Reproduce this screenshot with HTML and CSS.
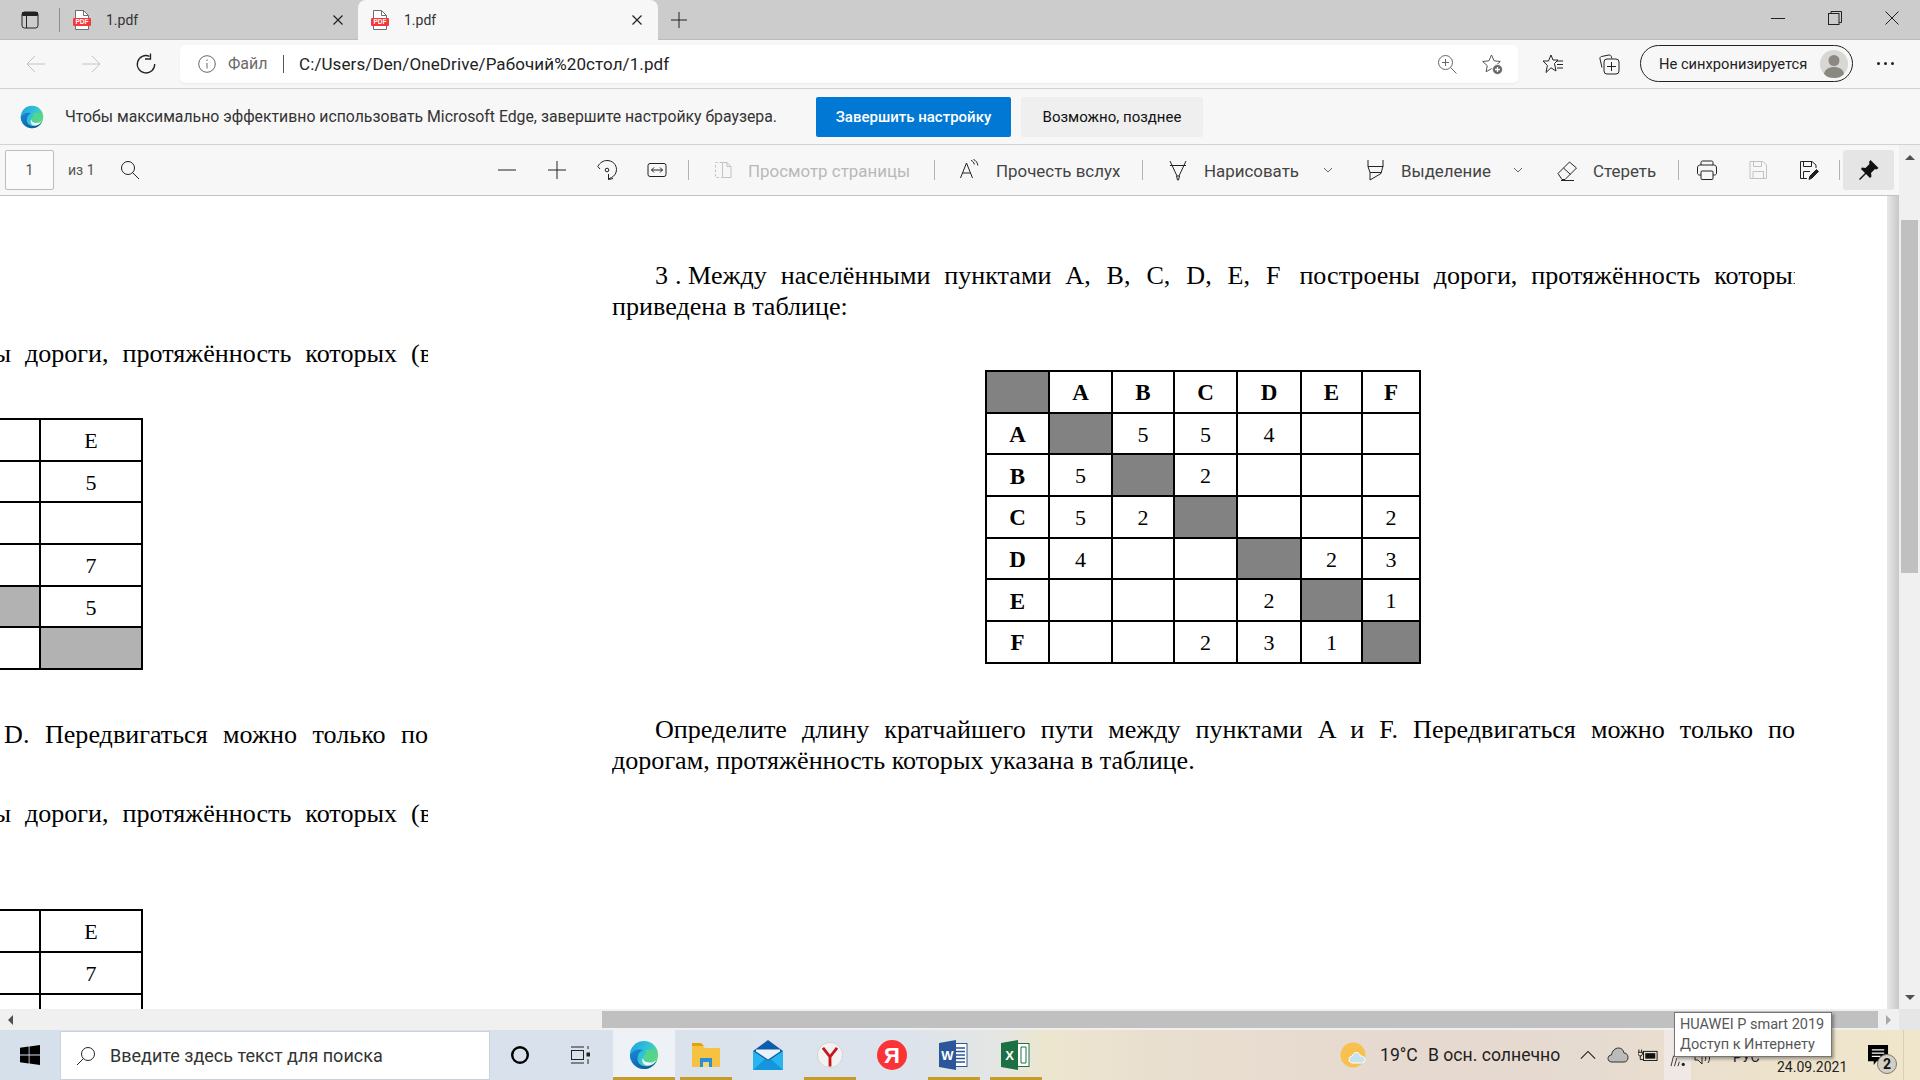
FILE: index.html
```html
<!DOCTYPE html>
<html>
<head>
<meta charset="UTF-8">
<title>1.pdf</title>
<link rel="stylesheet" href="styles.css">
</head>
<body>
<svg class="defs" width="0" height="0">
	<defs>
		<linearGradient id="edgeTop" x1="0" y1="0" x2="1" y2="0.6">
			<stop offset="0" stop-color="#1f9fe0"/>
			<stop offset="0.55" stop-color="#2fc3d8"/>
			<stop offset="1" stop-color="#66dc7a"/>
		</linearGradient>
		<linearGradient id="edgeLow" x1="0" y1="0" x2="1" y2="1">
			<stop offset="0" stop-color="#1a8ad6"/>
			<stop offset="1" stop-color="#0c4f9e"/>
		</linearGradient>
		<symbol id="pdf" viewBox="0 0 18 20">
			<path d="M2.5.5h8l5 5v14h-13z" fill="#fff" stroke="#6e6e6e"/>
			<path d="M10.5.5v5h5" fill="none" stroke="#6e6e6e"/>
			<rect y="8" width="18" height="8" rx="1" fill="#f4383c"/>
			<text x="9" y="14.4" class="pdf-mark">PDF</text>
		</symbol>
		<symbol id="edge" viewBox="0 0 32 32">
			<circle cx="16" cy="16" r="15" fill="url(#edgeTop)"/>
			<path d="M30 21c-2 6-8 10-14 10C8 31 1 24 1 16c3-5 9-7 14-5-4 1-6 5-6 9 0 5 4 8 9 8 5 0 9-3 12-7z" fill="url(#edgeLow)"/>
			<path d="M30.500 17c-1 3-5 5-9 5-4 0-6-2-6-4 0-1 1-1.500 2-2.500 1-1.500 1-3-.5-4.500 7-1 13 1 13.500 6z" fill="#55d58a"/>
			<path d="M15 19c0 3 3 5 7 5 3 0 6-1 8-3-3 5-8 7-12 6-3-1-5-4-3-8z" fill="#eaf6fb"/>
		</symbol>
		<symbol id="chev" viewBox="0 0 12 12">
			<path d="M2 4l4 4 4-4" fill="none" stroke="#666"/>
		</symbol>
	</defs>
</svg>

<div class="tabstrip">
	<div class="strip-btn">
		<svg class="ico i20" viewBox="0 0 20 20"><rect x="2" y="2" width="16" height="16" rx="2.500"/><path d="M2.500 2.500h15v3h-15z" fill="#222"/><path d="M6.500 5v13"/></svg>
	</div>
	<div class="tab-sep"></div>
	<div class="tab">
		<svg class="tab-pdf"><use href="#pdf"/></svg>
		<span class="tab-title">1.pdf</span>
		<svg class="ico i12" viewBox="0 0 12 12"><path d="M1.500 1.500l9 9M10.500 1.500l-9 9" stroke-width="1.200"/></svg>
	</div>
	<div class="tab tab-active">
		<svg class="tab-pdf"><use href="#pdf"/></svg>
		<span class="tab-title">1.pdf</span>
		<svg class="ico i12" viewBox="0 0 12 12"><path d="M1.500 1.500l9 9M10.500 1.500l-9 9" stroke-width="1.200"/></svg>
	</div>
	<div class="new-tab">
		<svg class="ico i20" viewBox="0 0 20 20"><path d="M10 2v16M2 10h16"/></svg>
	</div>
	<div class="win-controls">
		<div class="win-btn"><svg class="ico i14" viewBox="0 0 14 14"><path d="M0 7.500h14"/></svg></div>
		<div class="win-btn"><svg class="ico i14" viewBox="0 0 14 14"><rect x=".5" y="2.500" width="10.500" height="11"/><path d="M3 2.500V.5h10.500v11h-2.500"/></svg></div>
		<div class="win-btn"><svg class="ico i14" viewBox="0 0 14 14"><path d="M.5.5l13 13M13.500.5l-13 13"/></svg></div>
	</div>
</div>

<div class="addressbar">
	<div class="nav-btn muted"><svg class="ico i22" viewBox="0 0 22 22"><path d="M20 11H2M10 3l-8 8 8 8"/></svg></div>
	<div class="nav-btn muted"><svg class="ico i22" viewBox="0 0 22 22"><path d="M2 11h18M12 3l8 8-8 8"/></svg></div>
	<div class="nav-btn"><svg class="ico i22" viewBox="0 0 22 22"><path d="M14.500 3.300A8.700 8.700 0 1 0 19.700 11" stroke-width="1.300"/><path d="M15.500.5v5.500H10" stroke-width="1.300"/></svg></div>
	<div class="address-box">
		<svg class="ico i18 grey" viewBox="0 0 18 18"><circle cx="9" cy="9" r="8.300"/><path d="M9 8v5.500M9 4.500v1.500"/></svg>
		<span class="addr-file">Файл</span>
		<span class="addr-sep"></span>
		<span class="addr-url">C:/Users/Den/OneDrive/Рабочий%20стол/1.pdf</span>
		<svg class="ico i20 grey addr-zoom" viewBox="0 0 20 20"><circle cx="8.500" cy="8.500" r="7"/><path d="M13.500 13.500l6 6M8.500 5v7M5 8.500h7"/></svg>
		<svg class="ico i22 addr-star" viewBox="0 0 22 22"><path d="M10.500 2l2.600 5.800 6.200.7-4.600 4.200 1.200 6-5.400-3-5.400 3 1.200-6L1.700 8.500l6.200-.7z" stroke="#555"/><circle cx="16.500" cy="16.500" r="5" fill="#666" stroke="#f7f7f7"/><path d="M16.500 14v5M14 16.500h5" stroke="#fff" stroke-width="1.300"/></svg>
	</div>
	<div class="addr-action"><svg class="ico i22" viewBox="0 0 22 22"><path d="M9 2l2 5h5l-3.500 3.500L14 18l-5-3.200L4 19.500l1.400-7L1 8h5.500z"/><path d="M15 8h6M15 11.500h6M15 15h6"/></svg></div>
	<div class="addr-action"><svg class="ico i22" viewBox="0 0 22 22"><path d="M4 14.500L2 6c-.300-1.300.400-2.300 1.500-2.500L11 2c1.300-.2 2 .5 2.300 1.500l.5 2"/><rect x="6" y="6" width="15" height="15" rx="3"/><path d="M13.500 9v9M9 13.500h9"/></svg></div>
	<div class="profile-pill">
		<span>Не синхронизируется</span>
		<svg class="avatar" viewBox="0 0 28 28"><circle cx="14" cy="14" r="14" fill="#d9d7d3"/><circle cx="14" cy="10.500" r="5.500" fill="#8b8781"/><path d="M4 24c1-5 5-7 10-7s9 2 10 7c-3 3-6 4-10 4s-7-1-10-4z" fill="#8b8781"/></svg>
	</div>
	<div class="more-btn"><i></i><i></i><i></i></div>
</div>

<div class="infobar">
	<svg class="edge-logo"><use href="#edge"/></svg>
	<span class="info-text">Чтобы максимально эффективно использовать Microsoft Edge, завершите настройку браузера.</span>
	<button class="btn-primary" type="button">Завершить настройку</button>
	<button class="btn-later" type="button">Возможно, позднее</button>
</div>

<div class="workspace">
	<div class="work-main">
		<div class="toolbar">
			<div class="page-input">1</div>
			<span class="page-total">из 1</span>
			<div class="tb-search"><svg class="ico i20" viewBox="0 0 20 20"><circle cx="8" cy="8" r="6.500"/><path d="M12.500 12.500l6.500 6.500"/></svg></div>
			<div class="tb-spacer"></div>
			<div class="tb-icon"><svg class="ico i20" viewBox="0 0 20 20"><path d="M1 10h18"/></svg></div>
			<div class="tb-icon"><svg class="ico i20" viewBox="0 0 20 20"><path d="M10 1v18M1 10h18"/></svg></div>
			<div class="tb-icon"><svg class="ico i20" viewBox="0 0 20 20"><path d="M3 9L.8 6.500C3 2.500 6.500.5 10 .5c5.500 0 9.500 4 9.500 9 0 3.500-2 6.500-5 8l-3 1.500"/><path d="M11.500 14v5.500l4.500-1"/><circle cx="10" cy="10" r="1.800"/></svg></div>
			<div class="tb-icon"><svg class="ico i20" viewBox="0 0 20 20"><rect x="1" y="3.500" width="18" height="13" rx="2"/><path d="M4.500 10h11M7 7.500L4.500 10 7 12.500M13 7.500l2.500 2.500-2.500 2.500"/></svg></div>
			<div class="tb-sep sep-fit"></div>
			<div class="tb-btn disabled w-view">
				<svg class="ico i20" viewBox="0 0 20 20"><path d="M9 2.500h-6.500v15H9" stroke-dasharray="2.500 2"/><path d="M9.500 2.500H14l4 4v11H9.500zM14 2.500v4h4"/></svg>
				<span class="tb-label">Просмотр страницы</span>
			</div>
			<div class="tb-sep"></div>
			<div class="tb-btn w-read">
				<svg class="ico i22" viewBox="0 0 22 22"><path d="M1.500 19L7.500 4l6 15M3.500 14h8"/><path d="M12 1.500c2 .5 3 2 3.300 4M14.500.5c2.500 1 4 3 4.300 6"/></svg>
				<span class="tb-label">Прочесть вслух</span>
			</div>
			<div class="tb-sep"></div>
			<div class="tb-btn w-draw">
				<svg class="ico i22" viewBox="0 0 22 22"><path d="M3 2l7 15h2l7-15M3 6.500h16M9.500 17l1 4h1l1-4"/></svg>
				<span class="tb-label">Нарисовать</span>
				<svg class="tb-chev"><use href="#chev"/></svg>
			</div>
			<div class="tb-btn w-mark">
				<svg class="ico i22" viewBox="0 0 22 22"><path d="M4 1v6.500h15V1M4 7.500l2 6v7.500l11-6.500 2-7.500M6 13.500h11"/></svg>
				<span class="tb-label">Выделение</span>
				<svg class="tb-chev"><use href="#chev"/></svg>
			</div>
			<div class="tb-btn w-erase">
				<svg class="ico i22" viewBox="0 0 22 22"><path d="M2 14.500L13.500 3l7 6L9 20.500h-3z"/><path d="M7.500 9l7 6.500M5 21.500h13"/></svg>
				<span class="tb-label">Стереть</span>
			</div>
			<div class="tb-sep"></div>
			<div class="tb-icon w-print"><svg class="ico i22" viewBox="0 0 22 22"><path d="M5 6V3.500C5 2.500 5.500 2 6.500 2h9c1 0 1.500.5 1.500 1.500V6"/><path d="M5 16H3.500C2 16 1.500 15 1.500 14V9c0-2 1-3 3-3h13c2 0 3 1 3 3v5c0 1-.5 2-2 2H17"/><rect x="5" y="12" width="12" height="8.500" rx="1"/></svg></div>
			<div class="tb-icon w-save disabled"><svg class="ico i22" viewBox="0 0 22 22"><path d="M3 2.500h13l3.500 3.500v13.500H3z"/><path d="M6.500 2.500v5h8v-5M6 19.500v-7h10.500v7"/></svg></div>
			<div class="tb-icon w-print"><svg class="ico i22" viewBox="0 0 22 22"><path d="M10 19.500H3.500v-17H15L19 6v3"/><path d="M6.500 2.500v5h8v-5M6.500 19v-6.500H13"/><path d="M12 20.500l1-3.500 6.500-6.500 2 2-6.500 6.500z" fill="#222"/></svg></div>
			<div class="tb-sep sep-pin"></div>
			<div class="tb-pin"><svg class="i22" viewBox="0 0 22 22"><path d="M12.500 1l8 8-2 1.500-1.500-.5-4 4 .5 3.500-1.500 1.500-4-4-6 6-1-1 6-6-4-4L4 8.500l3.500.5 4-4L11 3z" fill="#111"/></svg></div>
		</div>
		<div class="viewer">
			<div class="page-left">
				<div class="cut-line"><span class="wide-line">построены дороги, протяжённость которых (в</span></div>
				<table class="road-table faint table-first">
					<colgroup><col class="c-l0"><col class="c-l1"></colgroup>
					<tr><td></td><td>E</td></tr>
					<tr><td></td><td>5</td></tr>
					<tr><td></td><td></td></tr>
					<tr><td></td><td>7</td></tr>
					<tr><td class="shade"></td><td>5</td></tr>
					<tr><td></td><td class="shade"></td></tr>
				</table>
				<div class="cut-line line-d"><span class="d-line">A и D. Передвигаться можно только по</span></div>
				<div class="cut-line line-third"><span class="wide-line">построены дороги, протяжённость которых (в</span></div>
				<table class="road-table faint table-second">
					<colgroup><col class="c-l0"><col class="c-l1"></colgroup>
					<tr><td></td><td>E</td></tr>
					<tr><td></td><td>7</td></tr>
					<tr><td></td><td></td></tr>
				</table>
			</div>
			<div class="page-right">
				<p class="pdf-line first-line"><span class="task-no">3</span><span class="task-dot">.</span>Между населёнными пунктами <span class="point-list">A, B, C, D, E, F</span> построены дороги, протяжённость которых (в километрах)</p>
				<p class="pdf-line">приведена в таблице:</p>
				<table class="road-table solid table-main">
					<colgroup><col class="c-0"><col class="c-1"><col class="c-2"><col class="c-3"><col class="c-4"><col class="c-5"><col class="c-6"></colgroup>
					<tr><td class="shade"></td><th>A</th><th>B</th><th>C</th><th>D</th><th>E</th><th>F</th></tr>
					<tr><th>A</th><td class="shade"></td><td>5</td><td>5</td><td>4</td><td></td><td></td></tr>
					<tr><th>B</th><td>5</td><td class="shade"></td><td>2</td><td></td><td></td><td></td></tr>
					<tr><th>C</th><td>5</td><td>2</td><td class="shade"></td><td></td><td></td><td>2</td></tr>
					<tr><th>D</th><td>4</td><td></td><td></td><td class="shade"></td><td>2</td><td>3</td></tr>
					<tr><th>E</th><td></td><td></td><td></td><td>2</td><td class="shade"></td><td>1</td></tr>
					<tr><th>F</th><td></td><td></td><td>2</td><td>3</td><td>1</td><td class="shade"></td></tr>
				</table>
				<p class="pdf-line justified indent after-table">Определите длину кратчайшего пути между пунктами A и F. Передвигаться можно только по</p>
				<p class="pdf-line">дорогам, протяжённость которых указана в таблице.</p>
			</div>
			<div class="page-shadow"></div>
		</div>
	</div>
	<div class="vscroll">
		<div class="arrow-box"><i class="tri-up"></i></div>
		<div class="vthumb"></div>
		<div class="arrow-box arrow-end"><i class="tri-down"></i></div>
	</div>
</div>

<div class="hscroll">
	<div class="arrow-box-h"><i class="tri-left"></i></div>
	<div class="hthumb"></div>
	<div class="arrow-box-h"><i class="tri-right"></i></div>
	<div class="scroll-corner"></div>
</div>

<div class="taskbar">
	<div class="start-btn">
		<svg class="i20" viewBox="0 0 20 20"><path d="M0 2.800l8.700-1.200v8H0zM9.500 1.500L20 0v9.600H9.500zM0 10.400h8.700v8L0 17.200zM9.500 10.400H20V20L9.500 18.500z" fill="#000"/></svg>
	</div>
	<div class="search-box">
		<svg class="ico i20" viewBox="0 0 20 20"><circle cx="12" cy="8" r="6.500"/><path d="M7.500 12.500L1 19"/></svg>
		<span>Введите здесь текст для поиска</span>
	</div>
	<div class="task-fixed"><svg class="i20" viewBox="0 0 20 20"><circle cx="10" cy="10" r="7.800" fill="none" stroke="#000" stroke-width="2.400"/></svg></div>
	<div class="task-fixed task-view"><svg class="ico i20" viewBox="0 0 20 20"><path d="M1 2h13M1 18h13M18 1v3M18 14v5"/><rect x="1.500" y="5.500" width="12" height="9"/><rect x="17" y="8" width="2.500" height="3" fill="#222"/></svg></div>
	<div class="tile tile-active open"><svg class="tile-ico"><use href="#edge"/></svg></div>
	<div class="tile open">
		<svg class="tile-ico" viewBox="0 0 30 30"><path d="M1 5h10l3 3h15v19H1z" fill="#f5c242"/><path d="M1 3h9l3 3H1z" fill="#e5a00d"/><path d="M9 18h12v9h-3v-5h-6v5H9z" fill="#2a8fd6"/><rect x="12" y="22" width="6" height="5" fill="#f7d774"/></svg>
	</div>
	<div class="tile">
		<svg class="tile-ico" viewBox="0 0 30 30"><path d="M0 11L15 0l15 11v19H0z" fill="#0f5cab"/><path d="M0 11l15 10 15-10v19H0z" fill="#29b5ec"/><path d="M3 9.500h24v2L15 19.500 3 11.500z" fill="#eaf3fa"/><path d="M0 30l12-11 3 2 3-2 12 11z" fill="#1496dd"/></svg>
	</div>
	<div class="tile open">
		<svg class="tile-ico" viewBox="0 0 30 34"><circle cx="15" cy="17" r="14.300" fill="#f2f2f2" stroke="#cfcfcf"/><path d="M7 9l8 10 8-10M15 19v11" fill="none" stroke="#c8141b" stroke-width="3.200"/></svg>
	</div>
	<div class="tile">
		<svg class="tile-ico" viewBox="0 0 30 30"><ellipse cx="15" cy="15" rx="15" ry="15" fill="#fb3337"/><text x="15" y="23" class="ya-mark">Я</text></svg>
	</div>
	<div class="tile open">
		<svg class="tile-ico" viewBox="0 0 30 30"><rect x="14" y="3.500" width="14" height="23" fill="#fff" stroke="#2b579a"/><path d="M17 8h9M17 11.500h9M17 15h9M17 18.500h9M17 22h9" stroke="#2b579a" stroke-width="1.500"/><path d="M0 3l17-3v30L0 27z" fill="#2b579a"/><text x="8.500" y="20" class="app-mark">W</text></svg>
	</div>
	<div class="tile open">
		<svg class="tile-ico" viewBox="0 0 30 30"><rect x="14" y="3.500" width="14" height="23" fill="#fff" stroke="#1d7044"/><path d="M20 7v16h5V7z" fill="none" stroke="#1d7044"/><path d="M0 3l17-3v30L0 27z" fill="#1d7044"/><text x="8.500" y="20" class="app-mark">X</text></svg>
	</div>
	<div class="tray">
		<svg class="weather" viewBox="0 0 28 28"><circle cx="13" cy="14" r="12.500" fill="#f8c04e"/><path d="M13 22c-2.500 0-4-1.500-4-3.500s1.500-3.500 3.500-3.500c.5-2.500 2.500-4 4.500-3.500 2 .3 3 1.800 3.300 3.500 2.200-.3 4.700 1 4.700 3.500 0 2-1.500 3.500-3.500 3.500z" fill="#c5e2f3" stroke="#fff"/></svg>
		<span class="temp">19°C</span>
		<span class="weather-text">В осн. солнечно</span>
		<svg class="ico i14 tray-chev" viewBox="0 0 18 10"><path d="M1 9l8-8 8 8" stroke-width="1.300"/></svg>
		<svg class="tray-cloud" viewBox="0 0 22 16"><path d="M5 15c-2.500 0-4-1.500-4-3.500S2.500 8 4.500 8C5 4 8 1 11.500 1c3 0 5 2 5.500 5 2.500 0 4 2 4 4.500S19.500 15 17 15z" fill="#bbb" stroke="#333"/></svg>
		<svg class="tray-batt" viewBox="0 0 22 14"><path d="M1 1v3M4 1v3M0 4h5v2L3.500 8h-2L0 6zM2.500 8v4h3" fill="none" stroke="#111"/><rect x="6" y="3" width="15" height="10" fill="none" stroke="#111"/><rect x="8" y="5" width="11" height="6" fill="#111"/></svg>
		<div class="net-tile"><svg class="tray-net" viewBox="0 0 18 16"><path d="M1 15L4 3M5 15L7.500 6M9 15l1.500-5" fill="none" stroke="#222"/><circle cx="15" cy="13" r="1.800" fill="#222"/></svg></div>
		<svg class="tray-sound" viewBox="0 0 18 16"><path d="M1 6h3l4-4v12l-4-4H1z" fill="none" stroke="#222"/><path d="M11 5c1 2 1 4 0 6M14 3c2 3 2 7 0 10" fill="none" stroke="#222"/></svg>
		<span class="lang">РУС</span>
		<span class="date">24.09.2021</span>
		<div class="notify">
			<svg class="notify-bubble" viewBox="0 0 22 22"><path d="M0 0h21v17H9l-3 4v-4H0z" fill="#000"/><path d="M4 5h13M4 8.500h13M4 12h9" stroke="#fff" stroke-width="1.300"/></svg>
			<span class="notify-count">2</span>
		</div>
		<div class="show-desktop"></div>
	</div>
</div>

<div class="net-tooltip">
	<div>HUAWEI P smart 2019</div>
	<div>Доступ к Интернету</div>
</div>
</body>
</html>
```

FILE: styles.css
```css
* {
	box-sizing: border-box;
}

html, body {
	margin: 0;
	width: 1920px;
	height: 1080px;
	overflow: hidden;
}

body {
	position: relative;
	display: flex;
	flex-direction: column;
	background: #fff;
	color: #222;
	font-family: "Roboto", "Noto Sans", sans-serif;
	font-size: 15px;
}

.defs {
	display: block;
	height: 0;
}

.pdf-mark {
	font: 700 6.5px "Liberation Sans", sans-serif;
	fill: #fff;
	text-anchor: middle;
}

.ico {
	fill: none;
	stroke: #222;
	stroke-width: 1;
	flex: none;
}
.i12 { width: 12px; height: 12px; }
.i14 { width: 14px; height: 14px; }
.i18 { width: 18px; height: 18px; }
.i20 { width: 20px; height: 20px; flex: none; }
.i22 { width: 22px; height: 22px; flex: none; }
.grey { stroke: #666; }

/* tab strip */
.tabstrip {
	display: flex;
	align-items: center;
	height: 40px;
	background: #ccc;
	border-bottom: 1px solid #bbb;
}
.strip-btn {
	display: flex;
	justify-content: center;
	width: 59px;
}
.tab-sep {
	width: 1px;
	height: 24px;
	background: #8e8e8e;
}
.tab {
	display: flex;
	align-items: center;
	width: 298px;
	height: 40px;
	padding: 0 14px 0 13px;
}
.tab-active {
	width: 300px;
	margin-bottom: -1px;
	background: #f7f7f7;
	border-radius: 8px 8px 0 0;
	padding-right: 15px;
}
.tab-pdf {
	width: 18px;
	height: 20px;
	flex: none;
}
.tab-title {
	flex: 1;
	margin-left: 15px;
	font-size: 14px;
	color: #333;
}
.new-tab {
	display: flex;
	justify-content: center;
	width: 42px;
}
.win-controls {
	display: flex;
	margin-left: auto;
}
.win-btn {
	display: flex;
	justify-content: center;
	width: 57px;
	margin-top: -4px;
}

/* address row */
.addressbar {
	display: flex;
	align-items: center;
	height: 49px;
	padding: 0 0 1px 8px;
	background: #f7f7f7;
	border-bottom: 1px solid #d2d2d2;
}
.nav-btn {
	display: flex;
	justify-content: center;
	width: 55px;
}
.nav-btn.muted .ico {
	stroke: #c4c4c4;
}
.address-box {
	display: flex;
	align-items: center;
	width: 1338px;
	height: 38px;
	margin: 0 7px;
	padding-left: 18px;
	background: #fff;
	border-radius: 5px;
	box-shadow: 0 1px 2px rgba(0, 0, 0, 0.06);
}
.addr-file {
	width: 55px;
	margin-left: 12px;
	color: #6a6a6a;
	font-size: 16px;
}
.addr-sep {
	width: 1px;
	height: 18px;
	margin-right: 15px;
	background: #555;
}
.addr-url {
	width: 371px;
	white-space: nowrap;
	font-size: 17px;
	letter-spacing: 0.1px;
	color: #222;
}
.addr-zoom {
	margin-left: 767px;
}
.addr-star {
	margin-left: 24px;
}
.addr-action {
	display: flex;
	justify-content: center;
	width: 56px;
}
.profile-pill {
	display: flex;
	align-items: center;
	justify-content: space-between;
	width: 213px;
	height: 37px;
	margin-left: 3px;
	padding: 0 4px 0 18px;
	border: 1.500px solid #222;
	border-radius: 19px;
	font-size: 14.700px;
	white-space: nowrap;
}
.avatar {
	width: 28px;
	height: 28px;
}
.more-btn {
	display: flex;
	gap: 4px;
	margin-left: 24px;
}
.more-btn i {
	width: 3px;
	height: 3px;
	background: #222;
	border-radius: 50%;
}

/* setup banner */
.infobar {
	display: flex;
	align-items: center;
	height: 56px;
	padding-left: 21px;
	background: #f7f7f7;
	border-bottom: 1px solid #d2d2d2;
}
.edge-logo {
	width: 24px;
	height: 24px;
	margin-left: -1px;
	flex: none;
}
.info-text {
	width: 751px;
	margin-left: 21px;
	font-size: 15.800px;
	color: #333;
	white-space: nowrap;
}
.btn-primary,
.btn-later {
	height: 40px;
	border: 0;
	border-radius: 2px;
	font: 15px "Roboto", "Noto Sans", sans-serif;
}
.btn-primary {
	width: 195px;
	background: #0078d4;
	color: #fff;
	font-weight: 500;
}
.btn-later {
	width: 182px;
	margin-left: 10px;
	background: #efefef;
	color: #111;
}

/* pdf toolbar */
.workspace {
	display: flex;
	height: 864px;
}
.work-main {
	display: flex;
	flex-direction: column;
	width: 1899px;
}
.toolbar {
	display: flex;
	align-items: center;
	flex: none;
	height: 51px;
	padding-left: 5px;
	background: #f7f7f7;
	border-bottom: 1px solid #c4c4c4;
}
.page-input {
	width: 49px;
	height: 40px;
	border: 1px solid #bdbdbd;
	border-radius: 2px;
	background: #fbfbfb;
	color: #555;
	font-size: 14px;
	line-height: 38px;
	text-align: center;
}
.page-total {
	width: 36px;
	margin-left: 14px;
	color: #555;
	font-size: 14px;
}
.tb-search {
	display: flex;
	justify-content: center;
	width: 40px;
	margin-left: 6px;
}
.tb-spacer {
	width: 332px;
}
.tb-icon {
	display: flex;
	justify-content: center;
	width: 50px;
}
.tb-sep {
	width: 1px;
	height: 20px;
	background: #b4b4b4;
}
.sep-fit {
	margin-left: 6px;
}
.sep-pin {
	margin-left: 3px;
}
.tb-btn {
	display: flex;
	align-items: center;
	height: 40px;
	padding-left: 24px;
	color: #444;
	font-size: 16.900px;
	white-space: nowrap;
}
.tb-label {
	flex: 1;
	margin-left: 15px;
	padding-top: 1px;
}
.tb-chev {
	width: 12px;
	height: 12px;
	flex: none;
	margin-right: 8px;
}
.w-view { width: 245px; }
.w-read { width: 207px; }
.w-draw { width: 199px; }
.w-mark { width: 190px; padding-left: 22px; }
.w-erase { width: 146px; }
.w-print { width: 56px; }
.w-save { width: 45px; }
.disabled {
	color: #b9b9b9;
}
.disabled .ico {
	stroke: #c2c2c2;
}
.tb-pin {
	display: flex;
	align-items: center;
	justify-content: center;
	width: 51px;
	height: 40px;
	margin-left: 3px;
	background: #e5e5e5;
	border-radius: 3px;
}

/* pdf pages */
.viewer {
	display: flex;
	flex: 1;
	min-height: 0;
	overflow: hidden;
	background: #fff;
	color: #000;
	font-family: "Liberation Serif", "Times New Roman", serif;
	font-size: 26.100px;
}
.page-left {
	flex: none;
	width: 428px;
	padding-top: 142px;
	overflow: hidden;
}
.page-right {
	flex: none;
	width: 1183px;
	margin-left: 184px;
	padding-top: 64px;
	overflow: hidden;
}
.page-shadow {
	width: 12px;
	margin-left: auto;
	background: linear-gradient(to right, #e8e8e8, #c8c8c8);
}
.pdf-line {
	height: 31px;
	margin: 0;
	line-height: 31px;
	white-space: nowrap;
}
.first-line {
	padding-left: 43px;
	word-spacing: 7.400px;
}
.point-list {
	margin-right: 5px;
	word-spacing: 9.400px;
}
.task-no {
	margin-right: 7px;
}
.task-dot {
	margin-right: 6.500px;
}
.justified {
	white-space: normal;
	text-align: justify;
	text-align-last: justify;
}
.indent {
	padding-left: 43px;
}
.after-table {
	margin-top: 50px;
}
.cut-line {
	display: flex;
	justify-content: flex-end;
	height: 31px;
	line-height: 31px;
	white-space: nowrap;
	overflow: hidden;
}
.wide-line {
	flex: none;
	margin-right: -4px;
	word-spacing: 7.400px;
}
.d-line {
	flex: none;
	word-spacing: 8.900px;
}
.line-d {
	margin-top: 49px;
}
.line-third {
	margin-top: 48px;
}

.road-table {
	border-collapse: collapse;
	table-layout: fixed;
	border: 2px solid #000;
}
.road-table td,
.road-table th {
	height: 41.700px;
	padding: 2px 0 0;
	border: 2px solid #000;
	text-align: center;
	font-size: 22px;
	line-height: 1;
}
.road-table th {
	font-size: 23px;
	font-weight: 700;
}
.solid .shade {
	background: #828282;
}
.faint .shade {
	background: #b2b2b2;
}
.table-main {
	width: 434px;
	margin: 48px 0 0 373px;
}
.c-0, .c-1, .c-3 { width: 63px; }
.c-2 { width: 62px; }
.c-4 { width: 64px; }
.c-5 { width: 61px; }
.c-6 { width: 58px; }
.table-first,
.table-second {
	width: 182px;
	margin: 49px 0 0 -41px;
}
.table-second {
	margin-top: 80px;
}
.c-l0 { width: 80px; }
.c-l1 { width: 102px; }

/* scrollbars */
.vscroll {
	display: flex;
	flex-direction: column;
	align-items: center;
	width: 21px;
	background: #f0f0f0;
}
.arrow-box {
	display: flex;
	align-items: center;
	justify-content: center;
	height: 24px;
	flex: none;
}
.arrow-end {
	margin-top: auto;
}
.vthumb {
	width: 17px;
	height: 353px;
	margin-top: 51px;
	background: #c0c0c0;
}
.tri-up,
.tri-down,
.tri-left,
.tri-right {
	display: block;
	width: 0;
	height: 0;
	border-style: solid;
}
.tri-up {
	border-width: 0 5px 5px;
	border-color: transparent transparent #505050;
}
.tri-down {
	border-width: 5px 5px 0;
	border-color: #505050 transparent transparent;
}
.tri-left {
	border-width: 5px 5px 5px 0;
	border-color: transparent #505050 transparent transparent;
}
.tri-right {
	border-width: 5px 0 5px 5px;
	border-color: transparent transparent transparent #a8a8a8;
}
.hscroll {
	display: flex;
	align-items: center;
	flex: none;
	height: 21px;
	background: #f0f0f0;
}
.arrow-box-h {
	display: flex;
	align-items: center;
	justify-content: center;
	width: 21px;
	height: 21px;
}
.hthumb {
	width: 1276px;
	height: 17px;
	background: #c0c0c0;
}
.hscroll .arrow-box-h:first-child {
	margin-right: 581px;
}
.scroll-corner {
	width: 21px;
	height: 21px;
	background: #e6e6e6;
}

/* windows taskbar */
.taskbar {
	display: flex;
	align-items: center;
	flex: none;
	height: 50px;
	background: linear-gradient(to right, #d5e0ea 0, #d9e2ec 600px, #dce3ec 900px, #e4e6e3 1000px, #ede6cf 1045px, #e9dfcf 1150px, #e6d9d0 1400px, #e6dbd0 1600px, #eee4cb 1800px, #f0e6cc 1920px);
	color: #222;
}
.start-btn {
	display: flex;
	justify-content: center;
	width: 60px;
}
.search-box {
	display: flex;
	align-items: center;
	width: 430px;
	height: 49px;
	margin-top: 1px;
	padding-left: 15px;
	background: #fff;
	border: 1px solid #ccd2d8;
	font-size: 18px;
	color: #333;
}
.search-box span {
	margin-left: 14px;
	white-space: nowrap;
}
.task-fixed {
	display: flex;
	justify-content: center;
	width: 60px;
}
.task-view {
	margin-right: 3px;
}
.tile {
	position: relative;
	display: flex;
	align-items: center;
	justify-content: center;
	width: 62px;
	height: 50px;
}
.tile-active {
	background: #eef2f6;
}
.tile.open::after {
	content: "";
	position: absolute;
	left: 5px;
	right: 5px;
	bottom: 0;
	height: 3px;
	background: #c79a2a;
}
.tile-active.open::after {
	left: 0;
	right: 0;
}
.tile-ico {
	width: 30px;
	height: 30px;
}
.ya-mark {
	font: 700 22px "Liberation Sans", sans-serif;
	fill: #fff;
	text-anchor: middle;
}
.app-mark {
	font: 700 13px "Liberation Sans", sans-serif;
	fill: #fff;
	text-anchor: middle;
}
.tray {
	display: flex;
	align-items: center;
	height: 50px;
	margin-left: 293px;
	font-size: 17.600px;
}
.weather {
	width: 28px;
	height: 28px;
	flex: none;
}
.temp {
	width: 48px;
	margin-left: 12px;
}
.weather-text {
	width: 158px;
	white-space: nowrap;
}
.tray-chev {
	width: 16px;
	margin-left: -6px;
}
.tray-cloud {
	width: 22px;
	height: 16px;
	margin-left: 11px;
}
.tray-batt {
	width: 20px;
	height: 14px;
	margin-left: 9px;
}
.net-tile {
	display: flex;
	align-items: flex-end;
	justify-content: center;
	width: 27px;
	height: 50px;
	margin-left: 6px;
	padding-bottom: 13px;
	background: #efe8e4;
}
.tray-net {
	width: 16px;
	height: 14px;
}
.tray-sound {
	width: 18px;
	height: 16px;
	margin: 6px 0 0 3px;
}
.lang {
	width: 44px;
	margin: 4px 0 0 21px;
	font-size: 14px;
}
.date {
	width: 70px;
	margin-top: 24px;
	font-size: 14px;
	white-space: nowrap;
}
.notify {
	position: relative;
	width: 30px;
	height: 50px;
	margin-left: 21px;
}
.notify-bubble {
	position: absolute;
	left: 0;
	top: 15px;
	width: 21px;
	height: 21px;
}
.notify-count {
	position: absolute;
	left: 9px;
	top: 24px;
	width: 20px;
	height: 20px;
	border: 1px solid #777;
	border-radius: 50%;
	background: #d3cfc4;
	color: #111;
	font-size: 14px;
	font-weight: 700;
	line-height: 18px;
	text-align: center;
}
.show-desktop {
	width: 1px;
	height: 50px;
	margin-left: 5px;
	background: #d8cfb8;
}

.net-tooltip {
	position: absolute;
	left: 1674px;
	top: 1012px;
	width: 158px;
	height: 45px;
	padding: 2px 5px;
	background: #fff;
	border: 1px solid #767676;
	box-shadow: 2px 2px 3px rgba(0, 0, 0, 0.35);
	color: #575757;
	font-size: 14.500px;
	line-height: 20px;
	white-space: nowrap;
}
```
